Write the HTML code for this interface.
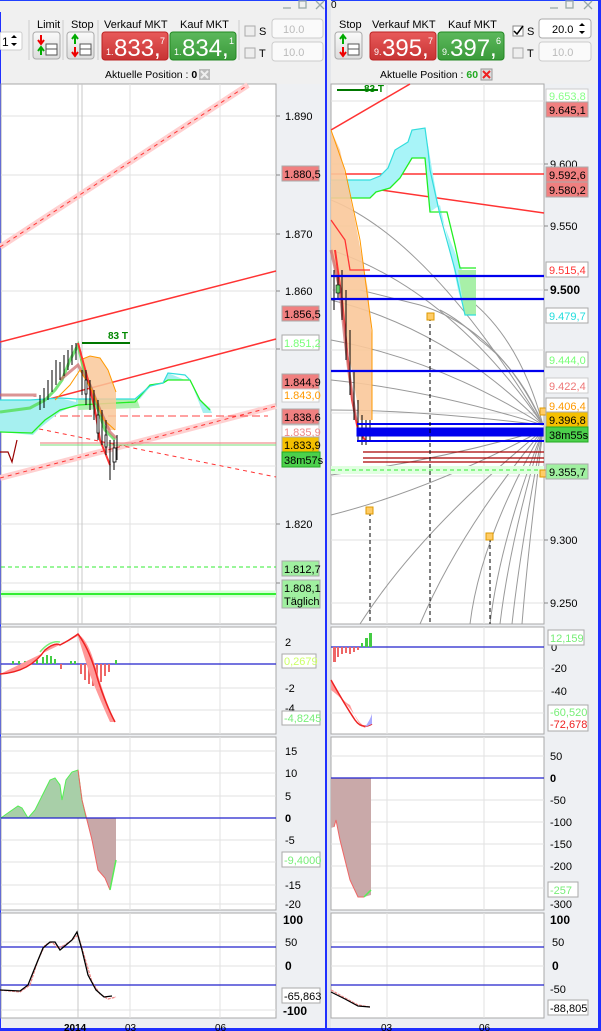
<!DOCTYPE html>
<html><head><meta charset="utf-8">
<style>
html,body{margin:0;padding:0;width:601px;height:1031px;overflow:hidden;background:#eef0f3;font-family:"Liberation Sans",sans-serif}
svg{position:absolute;left:0;top:0}
</style></head><body>
<svg width="601" height="1031" viewBox="0 0 601 1031" xmlns="http://www.w3.org/2000/svg" font-family="Liberation Sans, sans-serif">
<defs>
<linearGradient id="rb" x1="0" y1="0" x2="0" y2="1"><stop offset="0" stop-color="#e85a5a"/><stop offset="1" stop-color="#c73333"/></linearGradient>
<linearGradient id="gb" x1="0" y1="0" x2="0" y2="1"><stop offset="0" stop-color="#5cb85c"/><stop offset="1" stop-color="#3a9a3a"/></linearGradient>
<linearGradient id="btn" x1="0" y1="0" x2="0" y2="1"><stop offset="0" stop-color="#fafafa"/><stop offset="1" stop-color="#dcdcdc"/></linearGradient>
</defs>
<rect x="0" y="0" width="601" height="84" fill="#f0f0f0"/>
<rect x="0" y="0" width="601" height="1" fill="#2040ff"/>
<g fill="none" stroke="#9aa" stroke-width="1.3">
<line x1="283" y1="8" x2="291" y2="8"/><rect x="299" y="1" width="7" height="7"/><path d="M316 1 L324 9 M324 1 L316 9"/>
<line x1="550" y1="8" x2="558" y2="8"/><rect x="566" y="1" width="7" height="7"/><path d="M584 1 L592 9 M592 1 L584 9"/>
</g>
<text x="331" y="8" font-size="10" fill="#000">0</text>
<rect x="0" y="12" width="1" height="1019" fill="#2030ff"/>
<rect x="325" y="0" width="2" height="1031" fill="#2030ff"/>
<rect x="327" y="0" width="4" height="1031" fill="#e4e6ea"/>
<rect x="598" y="0" width="3" height="1031" fill="#2030ff"/>
<rect x="0" y="1028" width="601" height="3" fill="#2030ff"/>
<rect x="0" y="32" width="22" height="18" rx="2" fill="#fff" stroke="#ccc"/>
<text x="2" y="46" font-size="12">1</text><path d="M11 38 l3 -3 l3 3z M11 43 l3 3 l3 -3z" fill="#000"/>
<line x1="29" y1="20" x2="29" y2="60" stroke="#ccc"/>
<text x="37" y="28" font-size="11">Limit</text>
<rect x="33" y="32" width="27" height="27" rx="3" fill="url(#btn)" stroke="#aaa"/>
<path d="M41 35v8M38 40l3 4 3-4" stroke="#e00" stroke-width="2" fill="none"/><path d="M41 55v-7M38 51l3-4 3 4" stroke="#0a0" stroke-width="2" fill="none"/>
<rect x="46" y="44" width="11" height="11" fill="#fff" stroke="#555"/><line x1="46" y1="49" x2="57" y2="49" stroke="#555"/>
<line x1="63" y1="20" x2="63" y2="60" stroke="#ccc"/>
<text x="71" y="28" font-size="11">Stop</text>
<rect x="67" y="32" width="27" height="27" rx="3" fill="url(#btn)" stroke="#aaa"/>
<path d="M75 44v-8M72 39l3-4 3 4" stroke="#0a0" stroke-width="2" fill="none"/><path d="M75 47v8M72 52l3 4 3-4" stroke="#e00" stroke-width="2" fill="none"/>
<rect x="80" y="44" width="11" height="11" fill="#fff" stroke="#555"/><line x1="80" y1="49" x2="91" y2="49" stroke="#555"/>
<line x1="98" y1="20" x2="98" y2="60" stroke="#ccc"/>
<text x="104" y="28" font-size="11">Verkauf MKT</text>
<rect x="102" y="32" width="66" height="28" rx="3" fill="url(#rb)" stroke="#b22"/>
<text x="106" y="55" font-size="9" fill="#fff">1.</text><text x="114" y="56" font-size="24" fill="#fff">833,</text><text x="160" y="44" font-size="9" fill="#fff">7</text>
<text x="180" y="28" font-size="11">Kauf MKT</text>
<rect x="170" y="32" width="66" height="28" rx="3" fill="url(#gb)" stroke="#282"/>
<text x="174" y="55" font-size="9" fill="#fff">1.</text><text x="182" y="56" font-size="24" fill="#fff">834,</text><text x="229" y="44" font-size="9" fill="#fff">1</text>
<line x1="239" y1="20" x2="239" y2="60" stroke="#ccc"/>
<rect x="245" y="26" width="10" height="10" fill="#eee" stroke="#aaa"/><text x="259" y="35" font-size="11">S</text>
<rect x="245" y="48" width="10" height="10" fill="#eee" stroke="#aaa"/><text x="259" y="57" font-size="11">T</text>
<rect x="272" y="19" width="51" height="19" rx="3" fill="#fafafa" stroke="#ccc"/><text x="283" y="33" font-size="11" fill="#bbb">10.0</text>
<rect x="272" y="42" width="51" height="19" rx="3" fill="#fafafa" stroke="#ccc"/><text x="283" y="56" font-size="11" fill="#bbb">10.0</text>
<text x="105" y="78" font-size="10.5">Aktuelle Position : <tspan font-weight="bold">0</tspan></text>
<rect x="199" y="69" width="11" height="11" fill="#bbb"/><path d="M201 71l7 7M208 71l-7 7" stroke="#eee" stroke-width="2"/>
<text x="339" y="28" font-size="11">Stop</text>
<rect x="335" y="32" width="27" height="27" rx="3" fill="url(#btn)" stroke="#aaa"/>
<path d="M343 44v-8M340 39l3-4 3 4" stroke="#0a0" stroke-width="2" fill="none"/><path d="M343 47v8M340 52l3 4 3-4" stroke="#e00" stroke-width="2" fill="none"/>
<rect x="348" y="44" width="11" height="11" fill="#fff" stroke="#555"/><line x1="348" y1="49" x2="359" y2="49" stroke="#555"/>
<text x="372" y="28" font-size="11">Verkauf MKT</text>
<rect x="370" y="32" width="66" height="28" rx="3" fill="url(#rb)" stroke="#b22"/>
<text x="374" y="55" font-size="9" fill="#fff">9.</text><text x="382" y="56" font-size="24" fill="#fff">395,</text><text x="428" y="44" font-size="9" fill="#fff">7</text>
<text x="448" y="28" font-size="11">Kauf MKT</text>
<rect x="438" y="32" width="66" height="28" rx="3" fill="url(#gb)" stroke="#282"/>
<text x="442" y="55" font-size="9" fill="#fff">9.</text><text x="450" y="56" font-size="24" fill="#fff">397,</text><text x="496" y="44" font-size="9" fill="#fff">6</text>
<rect x="513" y="26" width="10" height="10" fill="#fff" stroke="#888"/><path d="M514 31l3 3 6-8" stroke="#000" stroke-width="1.5" fill="none"/><text x="527" y="35" font-size="11">S</text>
<rect x="513" y="48" width="10" height="10" fill="#eee" stroke="#aaa"/><text x="527" y="57" font-size="11">T</text>
<rect x="539" y="19" width="52" height="19" rx="3" fill="#fff" stroke="#aaa"/><text x="552" y="33" font-size="11">20.0</text><path d="M579 26l3-3 3 3zM579 31l3 3 3-3z"/>
<rect x="539" y="42" width="52" height="19" rx="3" fill="#fafafa" stroke="#ccc"/><text x="552" y="56" font-size="11" fill="#bbb">10.0</text>
<text x="380" y="78" font-size="10.5">Aktuelle Position : <tspan fill="#2a2" font-weight="bold">60</tspan></text>
<rect x="481" y="69" width="11" height="11" fill="#ddd" stroke="#999"/><path d="M483 71l7 7M490 71l-7 7" stroke="#e22" stroke-width="2"/>

<g fill="#fff" stroke="#a8a8a8">
<rect x="1" y="84" width="275" height="540"/>
<rect x="1" y="627" width="275" height="107"/>
<rect x="1" y="737" width="275" height="173"/>
<rect x="1" y="913" width="275" height="105"/>
<rect x="331" y="84" width="213" height="540"/>
<rect x="331" y="627" width="213" height="107"/>
<rect x="331" y="737" width="213" height="173"/>
<rect x="331" y="913" width="213" height="105"/>
</g>
<g stroke="#e2e2e2">
<path d="M1 116H276M1 175H276M1 234H276M1 291H276M1 349H276M1 407H276M1 466H276M1 524H276M1 583H276"/>
<path d="M130 84V624M220 84V624M130 627V734M220 627V734M130 737V910M220 737V910M130 913V1018M220 913V1018"/>
<path d="M331 101H544M331 164H544M331 226H544M331 290H544M331 350H544M331 413H544M331 476H544M331 540H544M331 603H544"/>
<path d="M387 84V624M484 84V624M387 627V734M484 627V734M387 737V910M484 737V910M387 913V1018M484 913V1018"/>
<path d="M1 642H276M1 688H276M1 710H276M1 751H276M1 773H276M1 796H276M1 840H276M1 862H276M1 885H276M1 904H276M1 942H276M1 966H276M1 1010H276"/>
<path d="M331 668H544M331 691H544M331 713H544M331 756H544M331 800H544M331 822H544M331 844H544M331 866H544M331 888H544M331 942H544M331 966H544"/>
</g>
<g stroke="#c8c8c8"><path d="M78 84V624M82 84V624M78 627V734M78 737V910M78 913V1018"/></g>

<line x1="0" y1="247" x2="248" y2="85" stroke="#ffd0d0" stroke-width="6"/>
<line x1="0" y1="247" x2="248" y2="85" stroke="#f33" stroke-dasharray="4 4"/>
<line x1="0" y1="342" x2="276" y2="271" stroke="#f33" stroke-width="1.5"/>
<line x1="0" y1="412" x2="276" y2="339" stroke="#f33" stroke-width="1.5"/>
<line x1="0" y1="478" x2="276" y2="406" stroke="#ffd0d0" stroke-width="6"/>
<line x1="0" y1="478" x2="276" y2="406" stroke="#f33" stroke-dasharray="4 4"/>
<line x1="0" y1="421" x2="276" y2="477" stroke="#f33" stroke-dasharray="4 4"/>
<line x1="0" y1="416" x2="268" y2="416" stroke="#f44" stroke-dasharray="8 4"/>
<line x1="40" y1="443" x2="276" y2="443" stroke="#e77"/>
<line x1="40" y1="445" x2="276" y2="445" stroke="#7d7"/>
<path d="M0 400 L30 400 L40 399 L60 398 L76 402 L76 399 L135 399 L150 385 L163 383 L168 373 L185 380 L190 380 L200 400 L210 408 L212 413 L203 413 L198 400 L190 380 L168 380 L162 383 L150 387 L140 399 L100 402 L76 405 L60 412 L40 428 L33 435 L0 432Z" fill="#a6f0f0" stroke="none"/>
<path d="M78 399 L137 399 L140 408 L78 410Z" fill="#aef0ae"/>
<path d="M0 432 L32 433 L45 420 L60 410 L78 405 L135 402 L150 385 L163 383 L168 380 L190 380 L200 400 L210 410" fill="none" stroke="#2e2" stroke-width="1.3"/>
<path d="M0 400 L30 400 L60 398 L76 399 L135 399 L150 386 L163 383 L168 373 L185 375 L190 380" fill="none" stroke="#3dd" stroke-width="1.2"/>
<path d="M80 360 L90 356 L100 358 L108 370 L116 392 L116 430 L108 430 L100 408 L92 390 L82 375 Z" fill="#f9c89a" opacity=".85"/>
<path d="M80 360 L90 356 L100 358 L108 370 L116 392" fill="none" stroke="#f90"/>
<path d="M0 412 L30 408 L45 400 L55 390 L62 380 L70 360 L78 345 L84 370 L95 400 L105 430 L115 440" fill="none" stroke="#5d5" stroke-width="3" opacity=".8"/>
<path d="M0 395 L35 395 L35 397" fill="none" stroke="#c66" stroke-width="3" opacity=".7"/>
<path d="M60 380 L78 365 L90 385 L100 410 L110 432 L116 438" fill="none" stroke="#c66" stroke-width="3" opacity=".7"/>
<path d="M78 343 L88 380 L95 410 L100 440 L110 465" fill="none" stroke="#f33" stroke-width="2"/>
<path d="M55 400 L70 385 L80 370 L92 390 L104 420 L115 430" fill="none" stroke="#f90" stroke-width="1"/>
<g stroke="#000" stroke-width="1">
<path d="M40 395V410M44 388V408M48 380V400M52 370V392M56 360V385M60 362V380M64 355V376M68 350V370M72 345V365M76 343V360M82 370V395M86 370V405M90 380V410M94 390V420M98 400V440M102 410V445M106 420V455M110 440V480M114 440V470M117 435V460"/>
</g>
<g fill="#fff" stroke="#000" stroke-width=".8"><rect x="85" y="380" width="2" height="14"/><rect x="97" y="415" width="2" height="18"/><rect x="105" y="435" width="2" height="12"/><rect x="113" y="448" width="3" height="14"/></g>
<line x1="82" y1="343" x2="130" y2="343" stroke="#070" stroke-width="2"/>
<text x="108" y="339" font-size="10" fill="#080" font-weight="bold">83 T</text>
<path d="M0 452 L8 452 L12 462 L17 440" fill="none" stroke="#900" stroke-width="1.2"/>
<line x1="1" y1="567" x2="276" y2="567" stroke="#3e3" stroke-dasharray="4 3"/>
<line x1="1" y1="594" x2="276" y2="594" stroke="#d8ffd8" stroke-width="7"/>
<line x1="1" y1="594" x2="276" y2="594" stroke="#3e3" stroke-width="2"/>

<g font-size="11" fill="#000">
<text x="285" y="120">1.890</text><text x="285" y="238">1.870</text><text x="285" y="295">1.860</text><text x="285" y="528">1.820</text>
</g>
<g stroke="#888"><path d="M276 116h4M276 175h4M276 234h4M276 291h4M276 349h4M276 524h4M276 583h4"/></g>
<g font-size="11">
<rect x="282" y="166" width="37" height="15" fill="#f08080" stroke="#aaa"/><text x="284" y="178">1.880,5</text>
<rect x="282" y="306" width="37" height="15" fill="#f08080" stroke="#aaa"/><text x="284" y="318">1.856,5</text>
<rect x="282" y="335" width="37" height="15" fill="#fff" stroke="#aaa"/><text x="284" y="347" fill="#7f7">1.851,2</text>
<rect x="282" y="374" width="37" height="15" fill="#f08080" stroke="#aaa"/><text x="284" y="386">1.844,9</text>
<rect x="282" y="389" width="37" height="13" fill="#fff" stroke="#ccc"/><text x="284" y="399" fill="#f90">1.843,0</text>
<rect x="282" y="409" width="37" height="15" fill="#f08080" stroke="#aaa"/><text x="284" y="421">1.838,6</text>
<rect x="282" y="425" width="37" height="13" fill="#fff" stroke="#ccc"/><text x="284" y="436" fill="#e88">1.835,9</text>
<rect x="282" y="437" width="37" height="15" fill="#f5c000" stroke="#aaa"/><text x="284" y="449">1.833,9</text>
<rect x="282" y="452" width="38" height="15" fill="#4cd04c" stroke="#2a2"/><text x="284" y="464">38m57s</text>
<rect x="282" y="561" width="37" height="15" fill="#a0f0a0" stroke="#aaa"/><text x="284" y="573">1.812,7</text>
<rect x="282" y="580" width="38" height="28" fill="#a0f0a0" stroke="#aaa"/><text x="284" y="592">1.808,1</text><text x="284" y="605">Täglich</text>
</g>

<g fill="none" stroke="#999" stroke-width="1">
<path d="M543 425 Q430 240 331 200"/>
<path d="M543 425 Q450 290 331 250"/>
<path d="M543 425 Q450 330 331 300"/>
<path d="M543 425 Q440 360 331 340"/>
<path d="M543 425 Q430 390 331 380"/>
<path d="M543 425 Q420 410 331 410"/>
<path d="M543 425 Q500 330 420 305 Q380 295 360 290"/>
<path d="M543 425 Q520 340 470 300"/>
<path d="M543 425 Q520 370 480 340 Q460 320 440 310"/>
<path d="M543 430 Q440 460 331 475"/>
<path d="M543 430 Q430 490 331 515"/>
<path d="M543 430 Q420 530 360 624"/>
<path d="M543 430 Q460 530 420 624"/>
<path d="M543 430 Q480 540 470 624"/>
<path d="M543 430 Q500 540 490 624"/>
<path d="M543 430 Q510 540 500 624"/>
<path d="M543 430 Q520 550 512 624"/>
<path d="M543 430 Q528 550 522 624"/>
</g>
<line x1="331" y1="130" x2="410" y2="84" stroke="#f33" stroke-width="1.5"/>
<line x1="331" y1="174" x2="544" y2="174" stroke="#f33" stroke-width="1.5"/>
<line x1="331" y1="183" x2="544" y2="213" stroke="#f33" stroke-width="1.5"/>
<path d="M331 180 L370 180 L380 176 L388 168 L395 150 L408 142 L412 130 L425 128 L440 215 L462 270 L476 270 L476 315 L465 315 L458 290 L450 250 L440 205 L430 212 L425 158 L412 158 L400 178 L390 188 L376 192 L370 198 L331 198Z" fill="#a8f4f8"/>
<path d="M458 270 L476 270 L476 315 L465 315Z" fill="#a8f0a8"/>
<path d="M331 198 L370 198 L376 192 L390 188 L400 178 L412 158 L425 158 L430 212 L447 212 L455 245 L460 268 L476 268" fill="none" stroke="#2e2" stroke-width="1.3"/>
<path d="M331 180 L370 180 L380 176 L388 168 L395 150 L408 142 L412 130 L425 128 L428 150 L430 170 L440 215 L455 270 L465 315 L476 315" fill="none" stroke="#3dd" stroke-width="1.2"/>
<path d="M331 130 L340 150 L355 220 L368 290 L372 340 L372 420 L360 420 L350 360 L340 300 L331 250Z" fill="#f9c89a" opacity=".9"/>
<path d="M331 130 L345 170 L360 240 L372 330 L372 420" fill="none" stroke="#f90"/>
<path d="M331 220 L345 240 L350 270 L370 270" fill="none" stroke="#f33" stroke-width="1.3"/>
<path d="M335 250 L342 300 L348 360 L352 400 L358 430 L365 440" fill="none" stroke="#f33" stroke-width="2"/>
<path d="M331 250 L340 290 L345 340 L350 380 L356 420" fill="none" stroke="#c66" stroke-width="3" opacity=".7"/>
<g stroke="#000"><path d="M334 270V310M338 275V300M342 270V320M346 290V360M350 330V395M354 370V420M358 400V440M362 415V445M366 420V445M370 420V440"/></g>
<rect x="336" y="285" width="4" height="8" fill="#6c6" stroke="#000" stroke-width=".6"/>
<line x1="337" y1="90" x2="378" y2="90" stroke="#070" stroke-width="2"/>
<text x="364" y="92" font-size="10" fill="#080" font-weight="bold">83 T</text>
<g stroke="#0000ee">
<path d="M331 276H544M331 299H544M331 371H544" stroke-width="2.3"/>
<path d="M357 424H544M357 441H544" stroke-width="2"/>
<rect x="357" y="428" width="186" height="8" fill="#0000ee"/>
</g>
<g stroke="#a00" stroke-width="1.3"><path d="M363 452H544M363 458H544M363 462H544"/></g>
<line x1="331" y1="470" x2="544" y2="470" stroke="#e0ffe0" stroke-width="8"/>
<line x1="331" y1="470" x2="544" y2="470" stroke="#3e3" stroke-dasharray="4 3"/>
<g stroke="#000" stroke-dasharray="4 3"><path d="M370 512V624M430 317V624M490 538V624"/></g>
<g fill="#fc6" stroke="#d90"><rect x="366" y="507" width="7" height="7"/><rect x="427" y="313" width="7" height="7"/><rect x="486" y="533" width="7" height="7"/><rect x="540" y="408" width="6" height="7"/><rect x="540" y="470" width="6" height="7"/></g>

<g font-size="11"><text x="550" y="168">9.600</text><text x="550" y="230">9.550</text><text x="550" y="294" font-weight="bold" font-size="12">9.500</text><text x="550" y="544">9.300</text><text x="550" y="607">9.250</text></g>
<g stroke="#888"><path d="M544 164h4M544 226h4M544 290h4M544 540h4M544 603h4"/></g>
<g font-size="11">
<rect x="546" y="89" width="42" height="13" fill="#fff" stroke="#ccc"/><text x="549" y="100" fill="#8f8">9.653,8</text>
<rect x="546" y="102" width="42" height="15" fill="#f08080" stroke="#aaa"/><text x="549" y="114">9.645,1</text>
<rect x="546" y="167" width="42" height="15" fill="#f08080" stroke="#aaa"/><text x="549" y="179">9.592,6</text>
<rect x="546" y="182" width="42" height="15" fill="#f08080" stroke="#aaa"/><text x="549" y="194">9.580,2</text>
<rect x="546" y="262" width="42" height="15" fill="#fff" stroke="#aaa"/><text x="549" y="274" fill="#f33">9.515,4</text>
<rect x="546" y="308" width="42" height="15" fill="#fff" stroke="#aaa"/><text x="549" y="320" fill="#2dd">9.479,7</text>
<rect x="546" y="352" width="42" height="15" fill="#fff" stroke="#aaa"/><text x="549" y="364" fill="#7f7">9.444,0</text>
<rect x="546" y="378" width="42" height="15" fill="#fff" stroke="#ccc"/><text x="549" y="390" fill="#e77">9.422,4</text>
<rect x="546" y="398" width="42" height="15" fill="#fff" stroke="#aaa"/><text x="549" y="410" fill="#f90">9.406,4</text>
<rect x="546" y="412" width="42" height="15" fill="#f5c000" stroke="#aaa"/><text x="549" y="424">9.396,8</text>
<rect x="546" y="427" width="42" height="15" fill="#4cd04c" stroke="#2a2"/><text x="549" y="439">38m55s</text>
<rect x="546" y="464" width="42" height="15" fill="#a0f0a0" stroke="#aaa"/><text x="549" y="476">9.355,7</text>
</g>

<line x1="1" y1="664" x2="276" y2="664" stroke="#22c" stroke-width="1.2"/>
<g fill="#4c4"><rect x="12" y="661" width="2" height="3"/><rect x="18" y="661" width="2" height="3"/><rect x="24" y="661" width="2" height="3"/><rect x="30" y="661" width="2" height="3"/><rect x="36" y="660" width="2" height="4"/><rect x="42" y="657" width="2" height="7"/><rect x="46" y="655" width="2" height="9"/><rect x="50" y="656" width="2" height="8"/><rect x="54" y="659" width="2" height="5"/><rect x="70" y="661" width="2" height="3"/><rect x="74" y="661" width="2" height="3"/><rect x="115" y="660" width="2" height="4"/></g>
<g fill="#e66"><rect x="60" y="664" width="2" height="5"/><rect x="80" y="664" width="2" height="10"/><rect x="84" y="664" width="2" height="16"/><rect x="88" y="664" width="2" height="20"/><rect x="92" y="664" width="2" height="22"/><rect x="96" y="664" width="2" height="20"/><rect x="100" y="664" width="2" height="18"/><rect x="104" y="664" width="2" height="12"/><rect x="108" y="664" width="2" height="8"/></g>
<path d="M0 674 Q30 672 45 650 Q55 642 60 645 Q70 640 78 634 Q88 640 95 665 Q105 700 115 722 L110 722 Q100 700 90 675 Q82 650 78 636" fill="#f99" stroke="none"/>
<path d="M0 674 Q30 672 45 650 Q55 642 60 645 Q70 640 78 634 Q90 650 98 680 Q106 705 115 722" fill="none" stroke="#e22" stroke-width="1.5"/>
<path d="M40 652 Q50 640 60 642" fill="none" stroke="#7e7" stroke-width="1.5"/>
<g font-size="11"><text x="285" y="646">2</text><text x="285" y="692">-2</text><text x="285" y="712">-4</text></g>
<rect x="282" y="654" width="34" height="14" fill="#fff" stroke="#aaa"/><text x="284" y="665" font-size="11" fill="#cf6">0,2679</text>
<rect x="282" y="711" width="38" height="14" fill="#fff" stroke="#aaa"/><text x="284" y="722" font-size="11" fill="#7e7">-4,8245</text>
<line x1="331" y1="647" x2="544" y2="647" stroke="#22c" stroke-width="1.2"/>
<g fill="#e66"><rect x="333" y="647" width="3" height="15"/><rect x="337" y="647" width="2" height="10"/><rect x="341" y="647" width="2" height="7"/><rect x="345" y="647" width="2" height="6"/><rect x="349" y="647" width="2" height="7"/><rect x="353" y="647" width="2" height="5"/><rect x="357" y="647" width="2" height="3"/></g>
<g fill="#4c4"><rect x="361" y="643" width="2" height="4"/><rect x="365" y="638" width="3" height="9"/><rect x="369" y="633" width="3" height="14"/></g>
<path d="M331 680 Q340 700 350 705 Q358 725 365 728 Q370 722 372 714 L372 724 Q365 730 358 720 Q345 700 331 690Z" fill="#f99"/>
<path d="M331 680 Q345 705 355 720 Q362 730 372 724" fill="none" stroke="#e22" stroke-width="1.5"/>
<path d="M365 727 Q370 720 372 714 L372 724Z" fill="#aaf"/>
<g font-size="11"><text x="551" y="651">0</text><text x="551" y="672">-20</text><text x="551" y="695">-40</text></g>
<rect x="548" y="630" width="36" height="15" fill="#fff" stroke="#aaa"/><text x="550" y="642" font-size="11" fill="#7e7">12,159</text>
<rect x="548" y="705" width="40" height="26" fill="#fff" stroke="#aaa"/><text x="550" y="716" font-size="11" fill="#7e7">-60,520</text><text x="550" y="728" font-size="11" fill="#e22">-72,678</text>

<path d="M1 818 L5 815 L18 806 L22 808 L28 818 L35 810 L45 790 L50 780 L55 778 L60 785 L62 800 L66 780 L72 772 L78 770 L82 800 L86 818Z" fill="#a8cfa8" stroke="#5e5"/>
<path d="M86 818 L92 840 L98 870 L105 878 L110 890 L116 860 L116 818Z" fill="#c8a8a8" stroke="none"/>
<path d="M78 770 L82 800 L92 840 L98 870 L105 878 L110 890" fill="none" stroke="#e66"/>
<path d="M110 890 L116 860" stroke="#5e5" stroke-width="1.5"/>
<line x1="1" y1="818" x2="276" y2="818" stroke="#22c" stroke-width="1.2"/>
<g font-size="11"><text x="285" y="755">15</text><text x="285" y="777">10</text><text x="285" y="800">5</text><text x="285" y="822" font-weight="bold">0</text><text x="285" y="844">-5</text><text x="285" y="889">-15</text><text x="285" y="908">-20</text></g>
<rect x="282" y="852" width="38" height="15" fill="#fff" stroke="#aaa"/><text x="284" y="864" font-size="11" fill="#7e7">-9,4000</text>
<path d="M331 778 L371 778 L371 895 L364 897 L358 897 L350 880 L345 860 L340 840 L336 820 L334 827 L331 828Z" fill="#c9a9a9"/>
<path d="M334 827 L336 820 L340 840 L345 860 L350 880 L358 897 L364 897" fill="none" stroke="#e66"/>
<path d="M364 897 L371 890" stroke="#5e5" stroke-width="1.5"/>
<line x1="331" y1="778" x2="544" y2="778" stroke="#22c" stroke-width="1.2"/>
<g font-size="11"><text x="550" y="760">50</text><text x="550" y="782" font-weight="bold">0</text><text x="550" y="804">-50</text><text x="550" y="826">-100</text><text x="550" y="848">-150</text><text x="550" y="870">-200</text><text x="550" y="908">-300</text></g>
<rect x="548" y="882" width="30" height="15" fill="#fff" stroke="#aaa"/><text x="550" y="894" font-size="11" fill="#7e7">-257</text>

<line x1="1" y1="947" x2="276" y2="947" stroke="#22c" stroke-width="1.2"/>
<line x1="1" y1="985" x2="276" y2="985" stroke="#22c" stroke-width="1.2"/>
<path d="M0 990 L20 992 L30 985 L38 960 L45 945 L52 942 L58 948 L65 945 L72 940 L78 935 L84 955 L92 982 L100 994 L108 999 L116 997" fill="none" stroke="#e88" stroke-width="1.3" stroke-dasharray="3 1"/>
<path d="M0 990 L20 991 L28 985 L36 965 L43 948 L50 942 L55 942 L60 950 L66 945 L72 940 L77 932 L82 950 L88 975 L96 990 L104 997 L112 996" fill="none" stroke="#000" stroke-width="1.3"/>
<g font-size="12" font-weight="bold"><text x="283" y="924">100</text><text x="283" y="1015">-100</text><text x="285" y="970">0</text></g>
<text x="285" y="946" font-size="11">50</text>
<rect x="282" y="988" width="38" height="15" fill="#fff" stroke="#aaa"/><text x="284" y="1000" font-size="11">-65,863</text>
<line x1="331" y1="947" x2="544" y2="947" stroke="#22c" stroke-width="1.2"/>
<line x1="331" y1="985" x2="544" y2="985" stroke="#22c" stroke-width="1.2"/>
<path d="M331 990 L345 998 L358 1005 L370 1007" fill="none" stroke="#e88" stroke-width="1.3" stroke-dasharray="3 1"/>
<path d="M331 992 L345 999 L358 1006 L370 1007" fill="none" stroke="#000" stroke-width="1.2"/>
<g font-size="12" font-weight="bold"><text x="550" y="924">100</text><text x="552" y="970">0</text></g>
<text x="552" y="946" font-size="11">50</text><text x="550" y="993" font-size="11">-50</text>
<rect x="548" y="1000" width="40" height="15" fill="#fff" stroke="#aaa"/><text x="550" y="1012" font-size="11">-88,805</text>

<g font-size="10"><text x="64" y="1031" font-weight="bold">2014</text><text x="125" y="1031">03</text><text x="215" y="1031">06</text><text x="381" y="1031">03</text><text x="479" y="1031">06</text></g>
</svg>
</body></html>
